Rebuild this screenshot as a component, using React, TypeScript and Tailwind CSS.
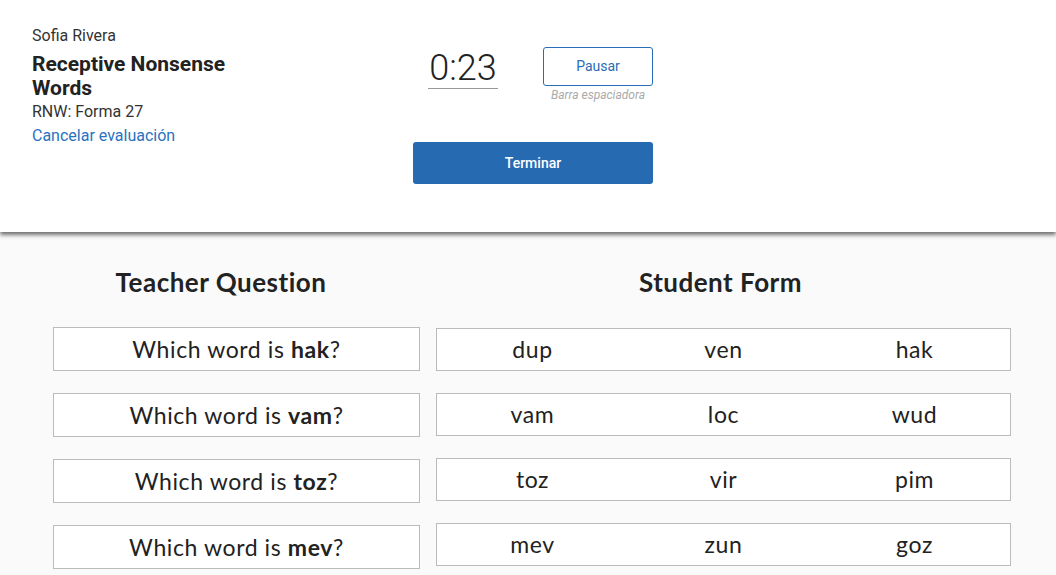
import React from "react";

const questions = [
  { word: "hak", options: ["dup", "ven", "hak"] },
  { word: "vam", options: ["vam", "loc", "wud"] },
  { word: "toz", options: ["toz", "vir", "pim"] },
  { word: "mev", options: ["mev", "zun", "goz"] },
];

const Header = () => {
  return (
    <header className="relative z-10 h-[232px] bg-white shadow-[0_3px_4px_rgba(0,0,0,0.55)] font-['Roboto',sans-serif] flex">
      <div className="w-[413px] pl-8 pt-[25px] flex flex-col">
        <p className="text-[16px] leading-[22px] text-[#333]">Sofia Rivera</p>
        <h1 className="mt-[5px] max-w-[215px] text-[21px] leading-[24px] font-bold text-[#222]">
          Receptive Nonsense Words
        </h1>
        <p className="text-[16px] leading-[23px] text-[#333]">RNW: Forma 27</p>
        <a href="#" className="text-[16px] leading-[25px] text-[#2a72c0]">
          Cancelar evaluación
        </a>
      </div>
      <div className="w-[240px] pt-[47px] flex flex-col">
        <div className="flex gap-[30px]">
          <div className="w-[100px] flex justify-center">
            <span className="inline-block h-[42px] border-b border-[#999] px-[1px] text-[36px] leading-[42px] font-light text-[#222]">
              0:23
            </span>
          </div>
          <div className="w-[110px] flex flex-col items-center">
            <button className="w-[110px] h-[39px] rounded-[3px] border border-[#2a6cb5] bg-white text-[14px] text-[#2a6cb5]">
              Pausar
            </button>
            <span className="mt-[1px] text-[12px] italic leading-[16px] text-[#aaa] whitespace-nowrap">
              Barra espaciadora
            </span>
          </div>
        </div>
        <button className="mt-[39px] h-[42px] w-[240px] rounded-[3px] bg-[#266ab2] text-[14px] font-medium text-white">
          Terminar
        </button>
      </div>
    </header>
  );
};

const Board = () => {
  return (
    <main className="bg-[#fafafa] min-h-[343px] pt-[32px] font-['Lato',sans-serif] text-[#222]">
      <div className="flex gap-4 pl-[53px]">
        <section className="w-[367px] flex flex-col">
          <h2 className="pr-[31px] text-center text-[26px] leading-[36px] font-bold tracking-[0.5px] h-[63px]">
            Teacher Question
          </h2>
          <div className="flex flex-col gap-[22px]">
            {questions.map((q) => (
              <div
                key={q.word}
                className="h-[44px] border border-[#bbb] bg-white flex items-center justify-center text-[23px] tracking-[0.6px]"
              >
                <span>
                  Which word is <b className="font-bold">{q.word}</b>?
                </span>
              </div>
            ))}
          </div>
        </section>
        <section className="w-[575px] flex flex-col">
          <h2 className="pr-[6px] text-center text-[26px] leading-[36px] font-bold tracking-[0.5px] h-[64px]">
            Student Form
          </h2>
          <div className="flex flex-col gap-[22px]">
            {questions.map((q) => (
              <div
                key={q.word}
                className="h-[43px] border border-[#bbb] bg-white grid grid-cols-3 items-center text-[23px] tracking-[0.6px]"
              >
                {q.options.map((o) => (
                  <span key={o} className="text-center">
                    {o}
                  </span>
                ))}
              </div>
            ))}
          </div>
        </section>
      </div>
    </main>
  );
};

export default function App() {
  return (
    <div className="w-[1056px] h-[575px] overflow-hidden bg-[#fafafa]">
      <Header />
      <Board />
    </div>
  );
}
